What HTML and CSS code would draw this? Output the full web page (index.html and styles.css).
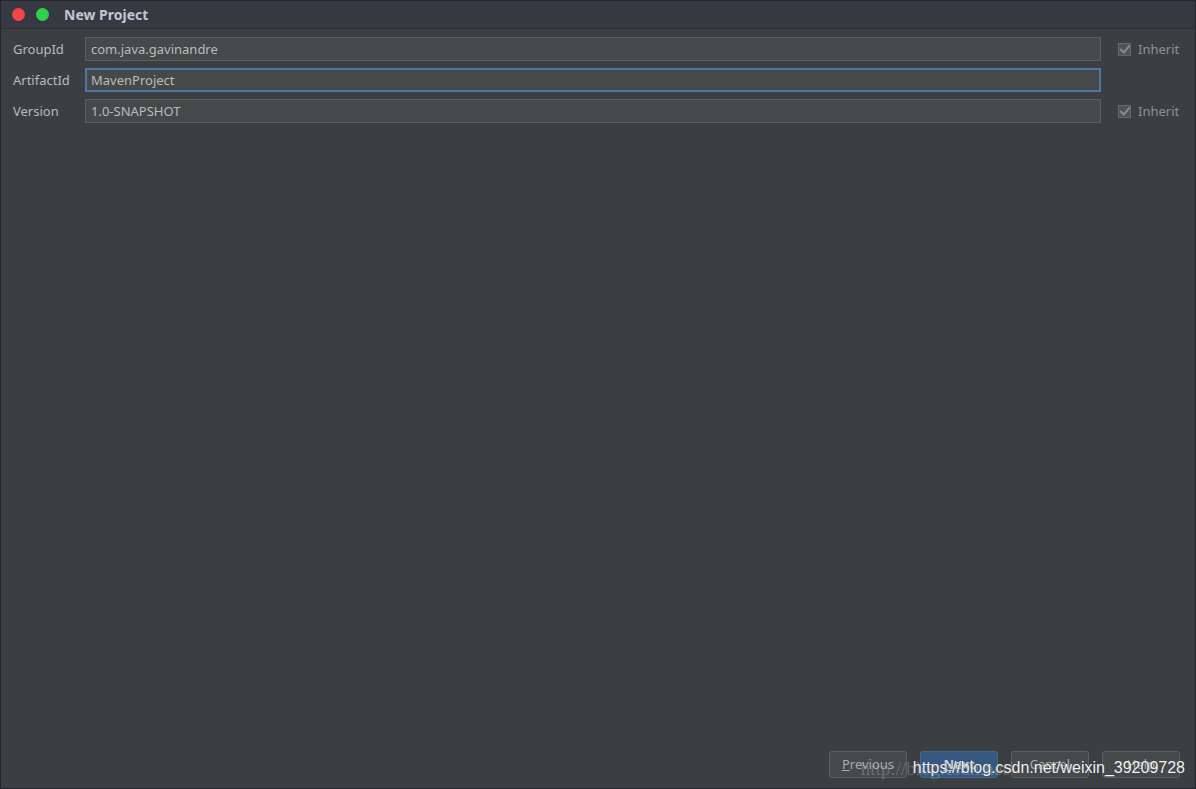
FILE: index.html
```html
<!DOCTYPE HTML>
<html>
    <head>
        <meta http-equiv="Content-Type" content="text/html; charset=UTF-8">
        <title>New Project</title>
        <link rel="stylesheet" href="styles.css">
    </head>
    <body>
        <div class="window">
            <div class="titlebar">
                <span class="light red"></span>
                <span class="light green"></span>
                <span class="title">New Project</span>
            </div>
            <div class="content">
                <div class="form">
                    <div class="line">
                        <label class="label" for="group">GroupId</label>
                        <input type="text" id="group" class="field" value="com.java.gavinandre"/>
                        <label class="inherit"><span class="check"></span>Inherit</label>
                    </div>
                    <div class="line">
                        <label class="label" for="artifact">ArtifactId</label>
                        <input type="text" id="artifact" class="field focused" value="MavenProject"/>
                        <span class="inherit"></span>
                    </div>
                    <div class="line">
                        <label class="label" for="version">Version</label>
                        <input type="text" id="version" class="field" value="1.0-SNAPSHOT"/>
                        <label class="inherit"><span class="check"></span>Inherit</label>
                    </div>
                </div>
                <div class="buttons">
                    <a class="btn"><u>P</u>revious</a>
                    <a class="btn default"><u>N</u>ext</a>
                    <a class="btn">Cancel</a>
                    <a class="btn">Help</a>
                </div>
            </div>
            <div class="watermark"><span class="ghost">http://blog.csdn.net/</span>https://blog.csdn.net/weixin_39209728</div>
        </div>
    </body>
</html>
```

FILE: styles.css
```css
html, body {
    margin: 0;
    height: 100%;
    background: #2b2d33;
}

.window {
    position: relative;
    height: 787px;
    border: 1px solid #24262b;
    background: #3c3f41;
    display: flex;
    flex-direction: column;
    font-family: "Noto Sans", "Open Sans", sans-serif;
    color: #bbbbbb;
    overflow: hidden;
}

.titlebar {
    height: 28px;
    background: #363941;
    border-bottom: 1px solid #2e3036;
    display: flex;
    align-items: center;
    padding-left: 11px;
    padding-bottom: 1px;
    box-sizing: border-box;
}

.light {
    width: 13px;
    height: 13px;
    border-radius: 50%;
    margin-right: 11px;
}
.red { background: #f0474a; }
.green { background: #2fd04a; }

.title {
    margin-left: 4px;
    font-size: 14px;
    font-weight: bold;
    color: #c2c6d2;
}

.content {
    flex: 1;
    display: flex;
    flex-direction: column;
    justify-content: space-between;
    padding: 8px 12px 10px 12px;
}

.form {
    display: flex;
    flex-direction: column;
    gap: 7px;
}

.line {
    display: flex;
    align-items: center;
    height: 24px;
}

.label {
    width: 72px;
    font-size: 13px;
    color: #bbbbbb;
}

.field {
    flex: 1;
    height: 24px;
    box-sizing: border-box;
    background: #45494a;
    border: 1px solid #5e6060;
    color: #bbbbbb;
    font-family: "Noto Sans", "Open Sans", sans-serif;
    font-size: 13px;
    padding: 0 5px;
    outline: none;
}

.field.focused {
    border: 2px solid #4f76a0;
    padding: 0 4px;
}

.inherit {
    width: 65px;
    margin-left: 17px;
    display: flex;
    align-items: center;
    font-size: 13px;
    color: #8e9092;
}

.check {
    width: 11px;
    height: 11px;
    border: 1px solid #666869;
    background: #505354;
    margin-right: 7px;
    position: relative;
}
.check::after {
    content: "";
    position: absolute;
    left: 3px;
    top: -1px;
    width: 4px;
    height: 8px;
    border: solid #8a8c8e;
    border-width: 0 2px 2px 0;
    transform: rotate(40deg);
}

.buttons {
    display: flex;
    justify-content: flex-end;
    gap: 13px;
    padding-right: 3px;
}

.btn {
    width: 76px;
    height: 25px;
    line-height: 25px;
    text-align: center;
    border: 1px solid #5e6060;
    border-radius: 3px;
    background: #474a4c;
    font-size: 13px;
    color: #a9abad;
}
.btn.default {
    background: #365880;
    border-color: #43688f;
    color: #c8d0da;
    font-weight: bold;
}

.watermark {
    position: absolute;
    right: 10px;
    bottom: 11px;
    font-family: "Liberation Sans", sans-serif;
    font-size: 16px;
    color: #f2f2f2;
    text-shadow: 0 0 1px #333;
}
.ghost {
    position: absolute;
    left: -52px;
    top: -1px;
    font-family: "Liberation Serif", serif;
    font-size: 19px;
    color: rgba(200, 200, 200, 0.3);
    text-shadow: none;
    white-space: nowrap;
}
```
